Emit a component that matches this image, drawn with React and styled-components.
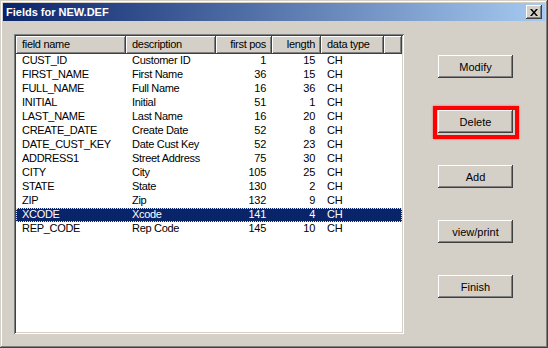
import React from 'react'
import styled, { createGlobalStyle } from 'styled-components'

const fields = [
  { name: 'CUST_ID', desc: 'Customer ID', pos: 1, len: 15, type: 'CH' },
  { name: 'FIRST_NAME', desc: 'First Name', pos: 36, len: 15, type: 'CH' },
  { name: 'FULL_NAME', desc: 'Full Name', pos: 16, len: 36, type: 'CH' },
  { name: 'INITIAL', desc: 'Initial', pos: 51, len: 1, type: 'CH' },
  { name: 'LAST_NAME', desc: 'Last Name', pos: 16, len: 20, type: 'CH' },
  { name: 'CREATE_DATE', desc: 'Create Date', pos: 52, len: 8, type: 'CH' },
  { name: 'DATE_CUST_KEY', desc: 'Date Cust Key', pos: 52, len: 23, type: 'CH' },
  { name: 'ADDRESS1', desc: 'Street Address', pos: 75, len: 30, type: 'CH' },
  { name: 'CITY', desc: 'City', pos: 105, len: 25, type: 'CH' },
  { name: 'STATE', desc: 'State', pos: 130, len: 2, type: 'CH' },
  { name: 'ZIP', desc: 'Zip', pos: 132, len: 9, type: 'CH' },
  { name: 'XCODE', desc: 'Xcode', pos: 141, len: 4, type: 'CH' },
  { name: 'REP_CODE', desc: 'Rep Code', pos: 145, len: 10, type: 'CH' }
]

const selected = 'XCODE'

const buttons = ['Modify', 'Delete', 'Add', 'view/print', 'Finish']

const App = () => (
  <>
    <GlobalStyle />
    <Window>
      <TitleBar>
        <Title>Fields for NEW.DEF</Title>
        <CloseButton>
          <svg width="8" height="7" viewBox="0 0 8 7">
            <path d="M0 0h2l2 2.5L6 0h2L5 3.5 8 7H6L4 4.5 2 7H0l3-3.5z" fill="#000" />
          </svg>
        </CloseButton>
      </TitleBar>
      <Body>
        <ListFrame>
          <Header>
            <HeadCell>field name</HeadCell>
            <HeadCell>description</HeadCell>
            <HeadCell $right>first pos</HeadCell>
            <HeadCell $right>length</HeadCell>
            <HeadCell>data type</HeadCell>
            <HeadCell />
          </Header>
          {fields.map(f => (
            <Row key={f.name} $active={f.name === selected}>
              <Cell>{f.name}</Cell>
              <Cell>{f.desc}</Cell>
              <Cell $right>{f.pos}</Cell>
              <Cell $right>{f.len}</Cell>
              <Cell>{f.type}</Cell>
            </Row>
          ))}
        </ListFrame>
        <Buttons>
          {buttons.map(label => (
            <ButtonSlot key={label} $marked={label === 'Delete'}>
              <Button>{label}</Button>
            </ButtonSlot>
          ))}
        </Buttons>
      </Body>
    </Window>
  </>
)

const GlobalStyle = createGlobalStyle`
    html, body {
      margin: 0;
      padding: 0;
      background: #d4d0c8;
    }
    body {
      font-family: "Liberation Sans", Arial, sans-serif;
      font-size: 11px;
    }
  `,
  Window = styled.div`
    box-sizing: border-box;
    width: 548px;
    height: 348px;
    padding: 3px;
    background: #d4d0c8;
    box-shadow:
      inset -1px -1px #404040,
      inset 1px 1px #d4d0c8,
      inset -2px -2px #808080,
      inset 2px 2px #ffffff;
    display: flex;
    flex-direction: column;
  `,
  TitleBar = styled.div`
    height: 18px;
    display: flex;
    align-items: center;
    padding: 0 3px 0 3px;
    background: linear-gradient(to right, #0a246a, #a6caf0);
  `,
  Title = styled.div`
    flex: 1;
    color: #fff;
    font-weight: bold;
    font-size: 11px;
  `,
  CloseButton = styled.div`
    box-sizing: border-box;
    width: 16px;
    height: 14px;
    background: #d4d0c8;
    display: flex;
    align-items: center;
    justify-content: center;
    box-shadow:
      inset -1px -1px #404040,
      inset 1px 1px #ffffff,
      inset -2px -2px #808080;
  `,
  Body = styled.div`
    flex: 1;
    display: flex;
    padding: 13px 0 0 11px;
  `,
  ListFrame = styled.div`
    box-sizing: border-box;
    width: 390px;
    height: 300px;
    padding: 2px;
    background: #fff;
    letter-spacing: -0.3px;
    box-shadow:
      inset 1px 1px #808080,
      inset -1px -1px #ffffff,
      inset 2px 2px #404040,
      inset -2px -2px #d4d0c8;
  `,
  columns = '110px 90px 56px 49px 63px 1fr',
  Header = styled.div`
    display: grid;
    grid-template-columns: ${columns};
    height: 18px;
  `,
  HeadCell = styled.div`
    box-sizing: border-box;
    background: #d4d0c8;
    color: #000;
    line-height: 17px;
    padding: ${p => (p.$right ? '0 6px 0 0' : '0 0 0 6px')};
    text-align: ${p => (p.$right ? 'right' : 'left')};
    white-space: nowrap;
    box-shadow:
      inset -1px -1px #404040,
      inset 1px 1px #ffffff,
      inset -2px -2px #808080;
  `,
  Row = styled.div`
    box-sizing: border-box;
    display: grid;
    grid-template-columns: ${columns};
    height: 14px;
    line-height: 13px;
    color: ${p => (p.$active ? '#fff' : '#000')};
    background: ${p => (p.$active ? '#0a246a' : 'transparent')};
    outline: ${p => (p.$active ? '1px dotted #f0e6b0' : 'none')};
    outline-offset: -1px;
  `,
  Cell = styled.div`
    padding: ${p => (p.$right ? '0 6px 0 0' : '0 0 0 6px')};
    text-align: ${p => (p.$right ? 'right' : 'left')};
    white-space: nowrap;
  `,
  Buttons = styled.div`
    display: flex;
    flex-direction: column;
    gap: 32px;
    padding: 21px 0 0 34px;
  `,
  ButtonSlot = styled.div`
    position: relative;
    width: 75px;
    height: 23px;
    &::after {
      content: '';
      display: ${p => (p.$marked ? 'block' : 'none')};
      position: absolute;
      left: -5px;
      top: -4px;
      width: 78px;
      height: 25px;
      border: 4px solid #ff0000;
      box-shadow: 0 0 2px rgba(255, 0, 0, 0.6);
    }
  `,
  Button = styled.div`
    box-sizing: border-box;
    width: 75px;
    height: 23px;
    display: flex;
    align-items: center;
    justify-content: center;
    background: #d4d0c8;
    color: #000;
    box-shadow:
      inset -1px -1px #404040,
      inset 1px 1px #ffffff,
      inset -2px -2px #808080;
  `

export default App
